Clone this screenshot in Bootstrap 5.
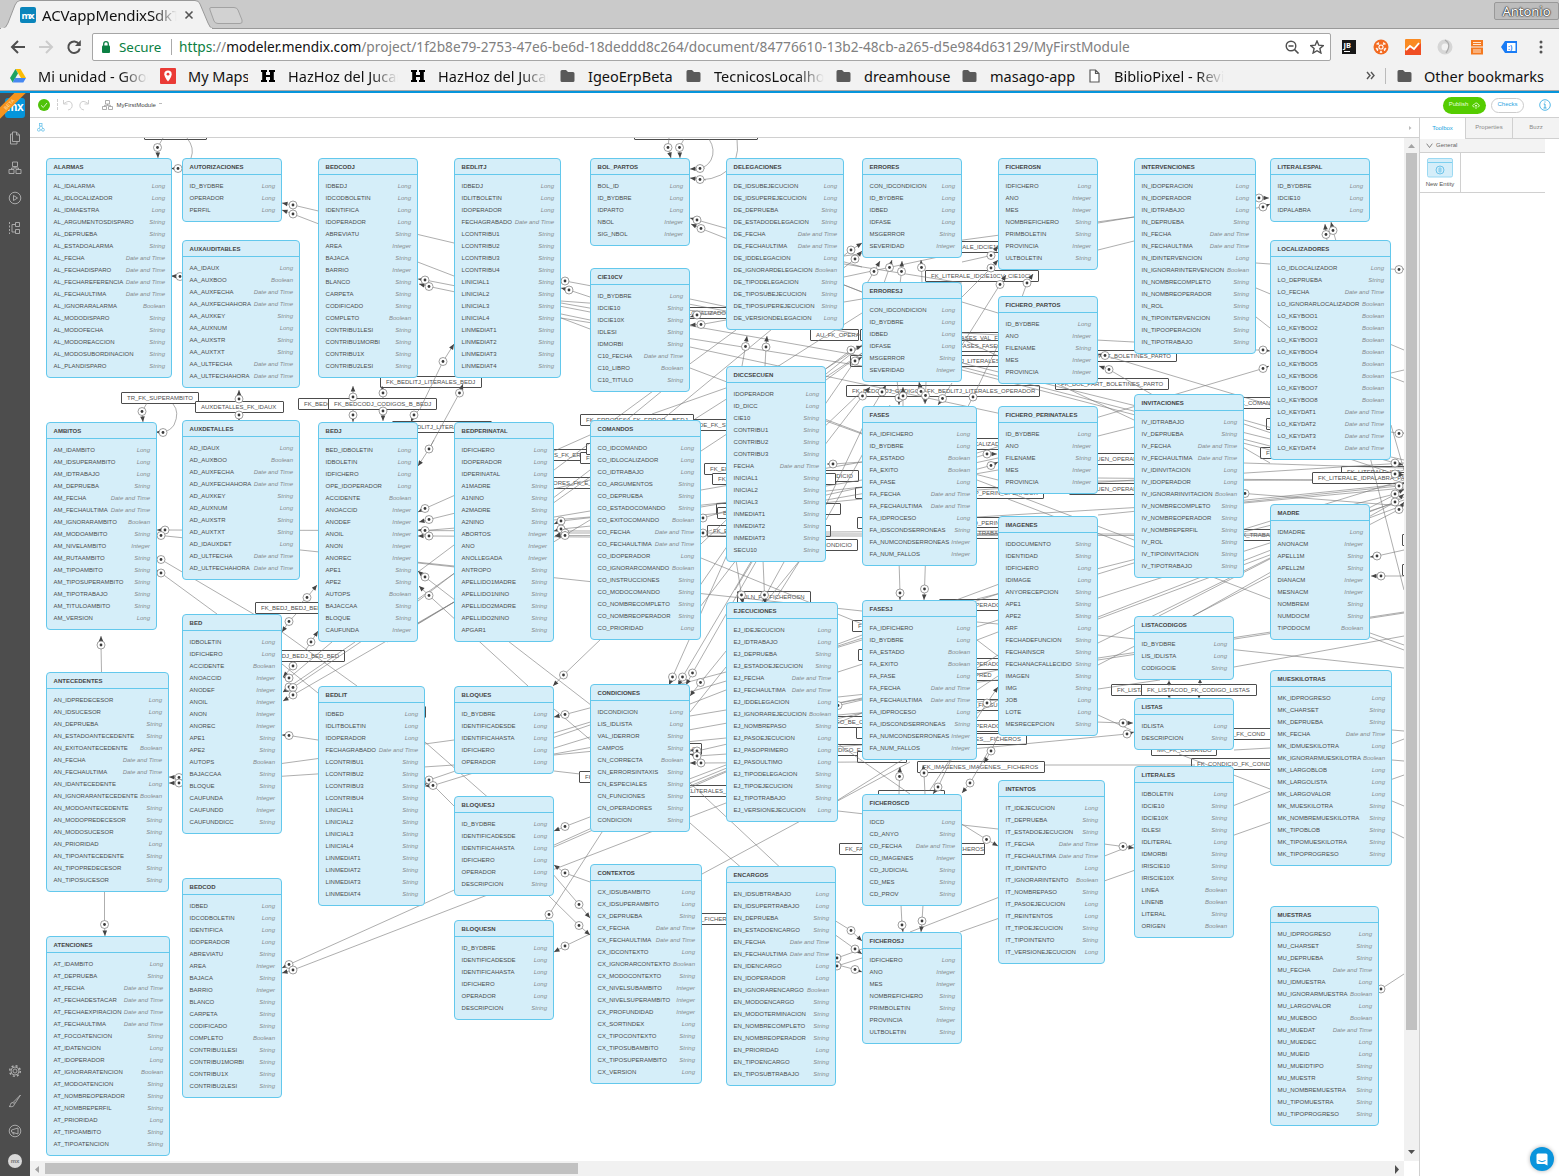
<!DOCTYPE html>
<html lang="en">
<head>
<meta charset="utf-8">
<title>ACVappMendixSdk</title>
<link rel="stylesheet" href="https://cdn.jsdelivr.net/npm/bootstrap@5.3.0/dist/css/bootstrap.min.css">
<style>
html,body{height:100%;overflow:hidden}
body{font-family:"Liberation Sans",Arial,sans-serif;background:#fff;color:#555;font-size:6px;line-height:1.2}
svg{display:block;flex:none}
.chrome{font-family:"Noto Sans","Open Sans",sans-serif;color:#111;font-size:14.5px;line-height:20px}
.tabstrip{height:29px;background:#cacaca;border-bottom:1px solid #999;position:relative}
.tabshape{position:absolute;left:0;top:0}
.tabtitle{width:136px;margin-left:6px;overflow:hidden;white-space:nowrap;font-size:15px;letter-spacing:-.15px;-webkit-mask-image:linear-gradient(90deg,#000 82%,transparent 99%)}
.tabinner{position:relative;height:29px;padding-left:20px}
.userchip{position:absolute;right:0;top:2px;width:65px;height:18px;border:1px solid #999;border-radius:2px;background:#bdbdbd;color:#fff;font-size:13px;line-height:16px;text-align:center;text-shadow:0 0 2px #222,0 0 1px #222,0 0 1px #222}
.toolbar{height:33px;background:#f2f2f2;padding:4px 0 0 10px}
.omnibox{width:1239px;height:28px;border:1px solid #a6a6a6;border-radius:2px;background:#fff;margin-left:10px;padding:0 6px 0 9px;white-space:nowrap}
.urltext{font-size:13.7px;color:#808080}
.bookmarks{height:29px;background:#f2f2f2;border-bottom:1px solid #a9a9a9;position:relative;white-space:nowrap}
.bm{display:flex;align-items:center;overflow:hidden;height:27px;flex:none}
.fade-end{overflow:hidden;-webkit-mask-image:linear-gradient(90deg,#000 75%,transparent 100%)}
.green{color:#0b8043}
.app{border-top:2px solid #0595db;height:1085px}
.siderail{width:30px;background:#4d4d4d;color:#b2b2b2;padding:5px 0 8px;position:relative;overflow:hidden;flex:none}
.siderail svg{margin:0 auto}
.ribbon{position:absolute;width:44px;height:8px;background:#f7941d;color:#ffe0b0;transform:rotate(-45deg);left:-13px;top:7px;font-size:5px;line-height:8px;text-align:center}
.mxlogo{width:20px;height:20px;border-radius:3px;background:#0595db;color:#fff;font-weight:700;font-size:12px;line-height:18px;text-align:center;margin-left:5px;letter-spacing:-.5px}
.head{height:25px;border-bottom:1px solid #d0d0d0}
.pubbtn{width:43px;height:17px;border-radius:9px;background:#5c0;color:#eaffdc}
.chkbtn{width:33px;height:15px;border-radius:8px;border:1px solid #ccc;color:#2ba5df;margin-left:5px}
.subbar{height:20px;border-bottom:1px solid #d0d0d0}
.canvas{position:relative;overflow:hidden;width:1374px;height:1023px}
.space{position:absolute;left:-30px;top:-138px;width:1404px;height:1162px}
.ent{position:absolute;background:#d5eef9;border:1px solid #63c8ec;border-radius:4px;padding:0 6px 5px 6.6px;white-space:nowrap}
.ent h6{font-size:6px;line-height:7px;font-weight:700;margin:0 -6px 5px -6.6px;padding:5px 0 3px 6.6px;height:16px;border-bottom:1px solid #63c8ec;color:#454545}
.attr{display:flex;justify-content:space-between;height:12px;line-height:12px;color:#4c4c4c}
.attr i{color:#858b8e}
.assoc{position:absolute;height:12px;border:1px solid #4c4c4c;border-radius:1px;background:#fff;color:#505050;line-height:10px;padding:0 5px;white-space:nowrap;overflow:hidden}
.assoc.to-end{display:flex;justify-content:flex-end}
.wires{position:absolute;left:0;top:0}
.vbar{width:15px;background:#f1f1f1;padding:0 2px;flex:none}
.hbar{height:15px;background:#f1f1f1;width:1374px}
.panel{width:140px;border-left:1px solid #d0d0d0;flex:none}
.ptab{height:21px;border-left:1px solid #d0d0d0;border-bottom:1px solid #d0d0d0;background:#f3f3f3;color:#8a8a8a}
.ptab.on{background:#fff;border-left:0;border-bottom:0;color:#1ba3e0}
.group-title{height:14px;width:125px;background:#f3f3f3;border-bottom:1px solid #d0d0d0;color:#666;padding-left:6px}
.tool-row{width:125px;height:40px;border-bottom:1px solid #d0d0d0}
.tool{width:41px;height:39px;border-right:1px solid #d0d0d0;padding-top:5px;color:#555}
.chat{position:absolute;left:1530px;top:1147px;width:24px;height:24px;border-radius:50%;background:#0a94dc;box-shadow:0 0 4px rgba(0,0,0,.3)}
</style>
<script src="https://cdn.jsdelivr.net/npm/bootstrap@5.3.0/dist/js/bootstrap.bundle.min.js"></script>
</head>
<body>
<div class="chrome">
  <div class="tabstrip">
    <svg class="tabshape" width="260" height="29"><path d="M0 28.5H3Q6 28 8 23L15 5Q17 .5 20 .5H195Q199 .5 200 4L208 23Q210 28.5 213 28.5" fill="#f2f2f2" stroke="#999"/><path d="M1 28.5H212" stroke="#f2f2f2" stroke-width="1.4"/><path d="M211 7.500H234Q237 7.500 238 10L242 20Q243 23.500 240 23.500H218Q215 23.500 214 21L210 10Q209 7.500 211 7.500" fill="#d2d2d2" stroke="#a2a2a2"/></svg>
    <div class="tabinner d-flex align-items-center">
      <svg width="16" height="16"><rect width="16" height="16" rx="2" fill="#0a85bb"/><text x="8" y="11.500" font-size="9.500" font-weight="700" fill="#fff" text-anchor="middle" textLength="13">mx</text></svg>
      <div class="tabtitle">ACVappMendixSdkT</div>
      <svg width="10" height="10" style="margin-left:6px"><path d="M1.500 1.500L8.500 8.500M8.500 1.500L1.500 8.500" stroke="#555" stroke-width="1.600"/></svg>
    </div>
    <div class="userchip">Antonio</div>
  </div>
  <div class="toolbar d-flex">
    <div class="d-flex align-items-center" style="height:28px;gap:12px">
      <svg width="16" height="16"><path d="M15 8H2M8 2L2 8L8 14" fill="none" stroke="#4f4f4f" stroke-width="2"/></svg>
      <svg width="16" height="16"><path d="M1 8H14M8 2L14 8L8 14" fill="none" stroke="#ccc" stroke-width="2"/></svg>
      <svg width="16" height="16"><path d="M13 5A5.800 5.800 0 1 0 13.800 9.500" fill="none" stroke="#4f4f4f" stroke-width="2"/><path d="M14.800 1V7H9Z" fill="#4f4f4f"/></svg>
    </div>
    <div class="omnibox d-flex align-items-center">
      <svg width="8" height="12"><rect y="4.500" width="8" height="7.500" rx="1" fill="#0b8043"/><path d="M1.700 5V3A2.300 2.300 0 0 1 6.300 3V5" fill="none" stroke="#0b8043" stroke-width="1.300"/></svg>
      <span class="green" style="margin-left:9px;font-size:13.4px;width:52px">Secure</span><span style="width:1px;height:16px;background:#aaa;margin-right:7px"></span>
      <span class="urltext"><span class="green">https</span>://<span style="color:#111">modeler.mendix.com</span>/project/1f2b8e79-2753-47e6-be6d-18deddd8c264/document/84776610-13b2-48cb-a265-d5e984d63129/MyFirstModule</span>
      <svg class="ms-auto" width="15" height="15" style="margin-right:10px"><circle cx="6" cy="6" r="4.800" fill="none" stroke="#4f4f4f" stroke-width="1.400"/><path d="M3.500 6H8.500M9.500 9.500L13.500 13.500" stroke="#4f4f4f" stroke-width="1.700"/></svg>
      <svg width="14" height="14"><path d="M7 1L8.800 5.200L13.300 5.600L9.900 8.600L10.900 13L7 10.700L3.100 13L4.100 8.600L.7 5.600L5.200 5.200Z" fill="none" stroke="#4f4f4f" stroke-width="1.400"/></svg>
    </div>
    <div class="d-flex align-items-center" style="height:28px;gap:16px;margin-left:10px">
      <svg width="16" height="16"><rect x="1" y="1" width="14" height="14" fill="#181818"/><text x="2.500" y="8.500" font-size="7.500" font-weight="700" fill="#fff">JB</text><path d="M3 12.500H9" stroke="#fff"/></svg>
      <svg width="16" height="16"><circle cx="8" cy="8" r="7.500" fill="#f26a21"/><circle cx="8" cy="8" r="2.600" fill="#fff"/><circle cx="8" cy="8" r="1.500" fill="#f26a21"/><path d="M3.500 5L5.500 3.500L5.800 5.500ZM12.500 5L10.500 3.500L10.200 5.500ZM3 9L5 10L4.500 12ZM13 9L11 10L11.500 12ZM7 13.500H9L8 11.800Z" fill="#fff" stroke="#fff" stroke-width=".7"/></svg>
      <svg width="16" height="16"><rect width="16" height="16" rx="1" fill="#fa8a22"/><path d="M0 12L5 8L9 11L16 4V16H0Z" fill="#f04e23"/><path d="M1 11L5 7L9 10L14 4" fill="none" stroke="#fff" stroke-width="1.800"/></svg>
      <svg width="16" height="16"><circle cx="8" cy="8" r="5.500" fill="none" stroke="#d6d6d6" stroke-width="4"/><path d="M8 1Q15 5 9 14" fill="none" stroke="#aaa" stroke-width="1.200"/></svg>
      <svg width="16" height="16"><path d="M2 1H14V7.500H2ZM2 8.500H14V15.500H2Z" fill="#f47920"/><path d="M4 3.500H12M4 5.500H12M4 11H12M4 13H12" stroke="#ffe6d2" stroke-width="1"/></svg>
      <svg width="16" height="16"><path d="M0 8L4 2H16V14H4Z" fill="#1a7cf5"/><rect x="6" y="4" width="8.500" height="8" fill="#fff"/><text x="7" y="10.500" font-size="7" font-weight="700" fill="#1a7cf5">:)</text></svg>
      <svg width="16" height="16"><circle cx="8" cy="3" r="1.500" fill="#555"/><circle cx="8" cy="8" r="1.500" fill="#555"/><circle cx="8" cy="13" r="1.500" fill="#555"/></svg>
    </div>
  </div>
  <div class="bookmarks d-flex" id="bookmarks"></div>
</div>

<div class="app d-flex">
  <div class="siderail d-flex flex-column">
    <div class="mxlogo">mx</div><div class="ribbon">BETA</div>
    <svg style="margin-top:13px" width="14" height="14" fill="none" stroke="currentColor" stroke-width=".9"><path d="M4.500 1H8.500L11.500 4V10.500H4.500ZM8.500 1V4H11.500M4.500 3H2.500V13H9V10.500"/></svg>
    <svg style="margin-top:16px" width="14" height="14" fill="none" stroke="currentColor" stroke-width=".9"><path d="M4.500 1H9.500V5.500H4.500ZM1 8.500H6V12.500H1ZM8 8.500H13V12.500H8ZM7 5.500V7M3.500 8.500V7H10.500V8.500"/></svg>
    <svg style="margin-top:16px" width="14" height="14" fill="none" stroke="currentColor" stroke-width=".9"><circle cx="7" cy="7" r="5.800"/><path d="M5.500 4.500V9.500L9.500 7Z"/></svg>
    <svg style="margin-top:16px" width="14" height="14" fill="none" stroke="currentColor" stroke-width=".9"><path d="M7.500 1.500H11.500V5.500H7.500ZM7.500 8.500H11.500V12.500H7.500ZM4 3.500H7.500M4 3.500V11H7.500"/><path d="M1.500 1V13" stroke-dasharray="2 1.500"/></svg>
    <svg style="margin-top:auto" width="14" height="14" fill="none" stroke="currentColor" stroke-width=".9"><circle cx="7" cy="7" r="2"/><circle cx="7" cy="7" r="4"/><circle cx="7" cy="7" r="5.300" stroke-width="1.500" stroke-dasharray="2 2.160"/></svg>
    <svg style="margin-top:16px" width="14" height="14" fill="none" stroke="currentColor" stroke-width=".9"><path d="M12.500 1L5.500 8L7 9.500L12.500 1M5 8.500Q2.500 8.500 2.500 10.500Q2.500 12 1 12.500Q6 13.500 6.500 10Z"/></svg>
    <svg style="margin-top:16px" width="14" height="14" fill="none" stroke="currentColor" stroke-width=".9"><circle cx="7" cy="7" r="5.800"/><path d="M3.500 6L10 4V10L3.500 8ZM5 8.500V10H6.500"/></svg>
    <svg style="margin-top:16px" width="14" height="14"><circle cx="7" cy="7" r="7" fill="#d9d9d9"/><text x="7" y="9" font-size="6" font-weight="700" fill="#777" text-anchor="middle">mx</text></svg>
  </div>
  <div class="flex-grow-1">
    <div class="head d-flex align-items-center" style="padding-left:8px">
      <svg width="12" height="12"><circle cx="6" cy="6" r="6" fill="#4fc20a"/><path d="M3 6.300L5.300 8.500L9 4" fill="none" stroke="#d8f5c8"/></svg>
      <svg width="40" height="14" style="margin-left:6px" fill="none" stroke="#cfcfcf"><path d="M1.500 1V13" stroke-dasharray="3 1"/><path d="M7.500 2V6H11.500M8 5.500Q14 1 16 6Q17 11 12 12M32.500 2V6H28.500M32 5.500Q26 1 24 6Q23 11 28 12"/></svg>
      <svg width="12" height="10" style="margin-left:6px" fill="none" stroke="#999" stroke-width=".8"><path d="M3.500 .5H7.500V4H3.500ZM.5 6.500H4.500V9.500H.5ZM6.500 6.500H10.500V9.500H6.500ZM5.500 4V5.300M2.500 6.500V5.300H8.500V6.500"/></svg>
      <span style="margin-left:2.500px;padding-top:1px;color:#444">MyFirstModule</span><svg width="5" height="4" style="margin-left:2px"><path d="M1 .5H4" stroke="#bbb"/></svg>
      <div class="ms-auto pubbtn d-flex align-items-center justify-content-center gap-1">Publish<svg width="8" height="7" fill="none" stroke="#eaffdc" stroke-width=".8"><path d="M2.500 5Q.5 5 .7 3.500Q1 2.500 2.300 2.500Q3 .5 5 1Q6 1.500 6 2.500Q7.500 2.500 7.300 4Q7 5 5.500 5M4 7V3M3 4L4 3L5 4"/></svg></div>
      <div class="chkbtn d-flex align-items-center justify-content-center">Checks</div>
      <svg width="12" height="12" style="margin:0 8px 1px 15px"><circle cx="6" cy="6" r="5.300" fill="none" stroke="#2ba5df" stroke-width=".8"/><path d="M6 5V9M4.700 5H6M4.500 9H7.500M5.400 3H6.500" stroke="#2ba5df" stroke-width=".9"/></svg>
    </div>
    <div class="d-flex">
      <div>
        <div class="subbar d-flex align-items-center justify-content-between" style="padding:0 7px"><svg width="8" height="9" fill="none" stroke="#6cc3ea" stroke-width=".8"><rect x="2.500" y=".5" width="2.500" height="2.500"/><circle cx="1.800" cy="6.800" r="1.400"/><circle cx="6" cy="6.800" r="1.400"/><path d="M3.500 3L2 5.500M4.500 3L6 5.500M3.200 7H4.600"/></svg><svg width="4" height="6"><path d="M1 1L3.500 3L1 5Z" fill="#bbb"/></svg></div>
        <div class="d-flex">
          <div>
            <div class="canvas"><div class="space" id="space"></div></div>
            <div class="hbar d-flex align-items-center"><svg width="15" height="14"><path d="M9 4V11L5 7.500Z" fill="#a3a3a3"/></svg><div style="width:533px;height:11px;background:#c1c1c1"></div><svg class="ms-auto" width="12" height="14"><path d="M3 3V12L7 7.500Z" fill="#505050"/></svg></div>
          </div>
          <div class="vbar d-flex flex-column" style="height:1023px"><svg width="11" height="15"><path d="M2 10H9L5.500 6Z" fill="#a3a3a3"/></svg><div style="height:877px;background:#c1c1c1"></div><svg class="mt-auto" width="11" height="16"><path d="M2 5H9L5.500 9Z" fill="#505050"/></svg></div>
        </div>
      </div>
      <div class="panel">
        <div class="d-flex">
          <div class="ptab on d-flex align-items-center justify-content-center" style="width:45px">Toolbox</div>
          <div class="ptab d-flex align-items-center justify-content-center" style="width:47px">Properties</div>
          <div class="ptab d-flex align-items-center justify-content-center" style="width:47px">Buzz</div>
        </div>
        <div class="group-title d-flex align-items-center"><svg width="7" height="6" style="margin-right:3px" fill="none" stroke="#777" stroke-width=".9"><path d="M.7 .7L3.500 4.500L6.300 .7"/></svg>General</div>
        <div class="tool-row"><div class="tool text-center"><svg class="mx-auto" width="26" height="20"><rect x=".5" y=".5" width="25" height="18.500" rx="1.500" fill="#d5eef9" stroke="#9bd9f2"/><path d="M1 4.500H25" stroke="#63c8ec" stroke-width=".8"/><circle cx="13" cy="12" r="4" fill="none" stroke="#53b9e6" stroke-width=".8"/><path d="M12 10H14V14H12ZM12 12H14" fill="none" stroke="#53b9e6" stroke-width=".6"/></svg><div style="margin-top:3px">New Entity</div></div></div>
      </div>
    </div>
  </div>
</div>
<div class="chat"><svg width="24" height="24"><path d="M8 6.500H16Q17.500 6.500 17.500 8V18.500L14.500 17H8Q6.500 17 6.500 15.500V8Q6.500 6.500 8 6.500Z" fill="#fff"/><path d="M8.500 13.500Q12 16 15.500 13.500" fill="none" stroke="#0a94dc" stroke-width="1"/></svg></div>

<script>
/* Bookmark bar: [icon, left gap, icon-to-text gap, text width, text, fades] */
const folder='<svg width="15" height="14"><path d="M.5 2.500Q.5 1 2 1H6L8 3H13Q14.500 3 14.500 4.500V11.500Q14.500 13 13 13H2Q.5 13 .5 11.500Z" fill="#5a5a5a"/></svg>';
const hh='<svg width="14" height="14"><path d="M0 1H6V3H5V6H9V3H8V1H14V3H12.800V11H14V13H8V11H9V8H5V11H6V13H0V11H1.200V3H0Z" fill="#000"/></svg>';
const drive='<svg width="16" height="14"><path d="M5.500 0H10.500L16 9H11Z" fill="#fbbc05"/><path d="M5.500 0L0 9L2.700 13.500L8 4.500Z" fill="#1da362"/><path d="M5 9H16L13.300 13.500H2.700Z" fill="#4688f1"/></svg>';
const maps='<svg width="16" height="16"><rect width="16" height="16" rx="1" fill="#ea3b36"/><path d="M8 2.500A3.700 3.700 0 0 0 4.300 6.200Q4.500 9 8 13.500Q11.500 9 11.700 6.200A3.700 3.700 0 0 0 8 2.500Z" fill="#fff"/><circle cx="8" cy="6.200" r="1.400" fill="#ea3b36"/></svg>';
const page='<svg width="11" height="14"><path d="M1 1H6.500L10 4.500V13H1ZM6.500 1V4.500H10" fill="#fff" stroke="#5a5a5a" stroke-width="1.200"/></svg>';
const bms=[[drive,10,12,110,'Mi unidad - Goog',1],[maps,12,12,60,'My Maps',0],[hh,13,13,110,'HazHoz del Jucar',1],[hh,13,13,110,'HazHoz del Jucar',1],[folder,12,13,86,'IgeoErpBeta',0],[folder,12,13,110,'TecnicosLocalhost',1],[folder,12,13,87,'dreamhouse',0],[folder,11,13,85,'masago-app',0],[page,14,14,110,'BiblioPixel - Revi',1]];
document.getElementById('bookmarks').innerHTML=bms.map(b=>`<div class="bm" style="margin-left:${b[1]}px;gap:${b[2]}px">${b[0]}<span class="${b[5]?'fade-end':''}" style="width:${b[3]}px">${b[4]}</span></div>`).join('')+
`<div class="bm ms-auto" style="margin-right:14px"><svg width="9" height="9" style="margin-right:10px"><path d="M1 1L4 4.500L1 8M5 1L8 4.500L5 8" fill="none" stroke="#555" stroke-width="1.400"/></svg><span style="width:1px;height:16px;background:#bbb;margin-right:11px"></span>${folder}<span style="margin-left:12px;width:121px">Other bookmarks</span></div>`;

/* Entities: NAME x y width attributes, each attribute ends with its type initial */
const T={L:'Long',S:'String',D:'Date and Time',B:'Boolean',I:'Integer'};
const E=`ALARMAS 46 158 126 AL_IDALARMA:L AL_IDLOCALIZADOR:L AL_IDMAESTRA:L AL_ARGUMENTOSDISPARO:S AL_DEPRUEBA:S AL_ESTADOALARMA:S AL_FECHA:D AL_FECHADISPARO:D AL_FECHAREFERENCIA:D AL_FECHAULTIMA:D AL_IGNORARALARMA:B AL_MODODISPARO:S AL_MODOFECHA:S AL_MODOREACCION:S AL_MODOSUBORDINACION:S AL_PLANDISPARO:S
AMBITOS 46 422 111 AM_IDAMBITO:L AM_IDSUPERAMBITO:L AM_IDTRABAJO:L AM_DEPRUEBA:S AM_FECHA:D AM_FECHAULTIMA:D AM_IGNORARAMBITO:B AM_MODOAMBITO:S AM_NIVELAMBITO:I AM_RUTAAMBITO:S AM_TIPOAMBITO:S AM_TIPOSUPERAMBITO:S AM_TIPOTRABAJO:S AM_TITULOAMBITO:S AM_VERSION:L
ANTECEDENTES 46 672 123 AN_IDPREDECESOR:L AN_IDSUCESOR:L AN_DEPRUEBA:S AN_ESTADOANTECEDENTE:S AN_EXITOANTECEDENTE:B AN_FECHA:D AN_FECHAULTIMA:D AN_IDANTECEDENTE:L AN_IGNORARANTECEDENTE:B AN_MODOANTECEDENTE:S AN_MODOPREDECESOR:S AN_MODOSUCESOR:S AN_PRIORIDAD:L AN_TIPOANTECEDENTE:S AN_TIPOPREDECESOR:S AN_TIPOSUCESOR:S
ATENCIONES 46 936 124 AT_IDAMBITO:L AT_DEPRUEBA:S AT_FECHA:D AT_FECHADESTACAR:D AT_FECHAEXPIRACION:D AT_FECHAULTIMA:D AT_FOCOATENCION:S AT_IDATENCION:L AT_IDOPERADOR:L AT_IGNORARATENCION:B AT_MODOATENCION:S AT_NOMBREOPERADOR:S AT_NOMBREPERFIL:S AT_PRIORIDAD:L AT_TIPOAMBITO:S AT_TIPOATENCION:S
AUTORIZACIONES 182 158 100 ID_BYDBRE:L OPERADOR:L PERFIL:L
AUXAUDITABLES 182 240 118 AA_IDAUX:L AA_AUXBOO:B AA_AUXFECHA:D AA_AUXFECHAHORA:D AA_AUXKEY:S AA_AUXNUM:L AA_AUXSTR:S AA_AUXTXT:S AA_ULTFECHA:D AA_ULTFECHAHORA:D
AUXDETALLES 182 420 118 AD_IDAUX:L AD_AUXBOO:B AD_AUXFECHA:D AD_AUXFECHAHORA:D AD_AUXKEY:S AD_AUXNUM:L AD_AUXSTR:S AD_AUXTXT:S AD_IDAUXDET:L AD_ULTFECHA:D AD_ULTFECHAHORA:D
BED 182 614 100 IDBOLETIN:L IDFICHERO:L ACCIDENTE:B ANOACCID:I ANODEF:I ANOIL:I ANON:I ANOREC:I APE1:S APE2:S AUTOPS:B BAJACCAA:S BLOQUE:S CAUFUNDA:I CAUFUNDD:I CAUFUNDDICC:S
BEDCOD 182 878 100 IDBED:L IDCODBOLETIN:L IDENTIFICA:L IDOPERADOR:L ABREVIATU:S AREA:I BAJACA:S BARRIO:I BLANCO:S CARPETA:S CODIFICADO:S COMPLETO:B CONTRIBU1LESI:S CONTRIBU1MORBI:S CONTRIBU1X:S CONTRIBU2LESI:S
BEDCODJ 318 158 100 IDBEDJ:L IDCODBOLETIN:L IDENTIFICA:L IDOPERADOR:L ABREVIATU:S AREA:I BAJACA:S BARRIO:I BLANCO:S CARPETA:S CODIFICADO:S COMPLETO:B CONTRIBU1LESI:S CONTRIBU1MORBI:S CONTRIBU1X:S CONTRIBU2LESI:S
BEDJ 318 422 100 BED_IDBOLETIN:L IDBOLETIN:L IDFICHERO:L OPE_IDOPERADOR:L ACCIDENTE:B ANOACCID:I ANODEF:I ANOIL:I ANON:I ANOREC:I APE1:S APE2:S AUTOPS:B BAJACCAA:S BLOQUE:S CAUFUNDA:I
BEDLIT 318 686 107 IDBED:L IDLITBOLETIN:L IDOPERADOR:L FECHAGRABADO:D LCONTRIBU1:S LCONTRIBU2:S LCONTRIBU3:S LCONTRIBU4:S LINICIAL1:S LINICIAL2:S LINICIAL3:S LINICIAL4:S LINMEDIAT1:S LINMEDIAT2:S LINMEDIAT3:S LINMEDIAT4:S
BEDLITJ 454 158 107 IDBEDJ:L IDLITBOLETIN:L IDOPERADOR:L FECHAGRABADO:D LCONTRIBU1:S LCONTRIBU2:S LCONTRIBU3:S LCONTRIBU4:S LINICIAL1:S LINICIAL2:S LINICIAL3:S LINICIAL4:S LINMEDIAT1:S LINMEDIAT2:S LINMEDIAT3:S LINMEDIAT4:S
BEDPERINATAL 454 422 100 IDFICHERO:L IDOPERADOR:L IDPERINATAL:L A1MADRE:S A1NINO:S A2MADRE:S A2NINO:S ABORTOS:I ANO:I ANOLLEGADA:I ANTROPO:S APELLIDO1MADRE:S APELLIDO1NINO:S APELLIDO2MADRE:S APELLIDO2NINO:S APGAR1:S
BLOQUES 454 686 100 ID_BYDBRE:L IDENTIFICADESDE:L IDENTIFICAHASTA:L IDFICHERO:L OPERADOR:L
BLOQUESJ 454 796 100 ID_BYDBRE:L IDENTIFICADESDE:L IDENTIFICAHASTA:L IDFICHERO:L OPERADOR:L DESCRIPCION:S
BLOQUESN 454 920 100 ID_BYDBRE:L IDENTIFICADESDE:L IDENTIFICAHASTA:L IDFICHERO:L OPERADOR:L DESCRIPCION:S
BOL_PARTOS 590 158 100 BOL_ID:L ID_BYDBRE:L IDPARTO:L NBOL:I SIG_NBOL:I
CIE10CV 590 268 100 ID_BYDBRE:L IDCIE10:S IDCIE10X:S IDLESI:S IDMORBI:S C10_FECHA:D C10_LIBRO:B C10_TITULO:S
COMANDOS 590 420 111 CO_IDCOMANDO:L CO_IDLOCALIZADOR:L CO_IDTRABAJO:L CO_ARGUMENTOS:S CO_DEPRUEBA:S CO_ESTADOCOMANDO:S CO_EXITOCOMANDO:B CO_FECHA:D CO_FECHAULTIMA:D CO_IDOPERADOR:L CO_IGNORARCOMANDO:B CO_INSTRUCCIONES:S CO_MODOCOMANDO:S CO_NOMBRECOMPLETO:S CO_NOMBREOPERADOR:S CO_PRIORIDAD:L
CONDICIONES 590 684 100 IDCONDICION:L LIS_IDLISTA:L VAL_IDERROR:S CAMPOS:S CN_CORRECTA:B CN_ERRORSINTAXIS:S CN_ESPECIALES:S CN_FUNCIONES:S CN_OPERADORES:S CONDICION:S
CONTEXTOS 590 864 112 CX_IDSUBAMBITO:L CX_IDSUPERAMBITO:L CX_DEPRUEBA:S CX_FECHA:D CX_FECHAULTIMA:D CX_IDCONTEXTO:L CX_IGNORARCONTEXTO:B CX_MODOCONTEXTO:S CX_NIVELSUBAMBITO:I CX_NIVELSUPERAMBITO:I CX_PROFUNDIDAD:I CX_SORTINDEX:L CX_TIPOCONTEXTO:S CX_TIPOSUBAMBITO:S CX_TIPOSUPERAMBITO:S CX_VERSION:L
DELEGACIONES 726 158 118 DE_IDSUBEJECUCION:L DE_IDSUPEREJECUCION:L DE_DEPRUEBA:S DE_ESTADODELEGACION:S DE_FECHA:D DE_FECHAULTIMA:D DE_IDDELEGACION:L DE_IGNORARDELEGACION:B DE_TIPODELEGACION:S DE_TIPOSUBEJECUCION:S DE_TIPOSUPEREJECUCION:S DE_VERSIONDELEGACION:L
DICCSECUEN 726 366 100 IDOPERADOR:L ID_DICC:L CIE10:S CONTRIBU1:S CONTRIBU2:S CONTRIBU3:S FECHA:D INICIAL1:S INICIAL2:S INICIAL3:S INMEDIAT1:S INMEDIAT2:S INMEDIAT3:S SECU10:S
EJECUCIONES 726 602 112 EJ_IDEJECUCION:L EJ_IDTRABAJO:L EJ_DEPRUEBA:S EJ_ESTADOEJECUCION:S EJ_FECHA:D EJ_FECHAULTIMA:D EJ_IDDELEGACION:L EJ_IGNORAREJECUCION:B EJ_NOMBREPASO:S EJ_PASOEJECUCION:L EJ_PASOPRIMERO:L EJ_PASOULTIMO:L EJ_TIPODELEGACION:S EJ_TIPOEJECUCION:S EJ_TIPOTRABAJO:S EJ_VERSIONEJECUCION:L
ENCARGOS 726 866 110 EN_IDSUBTRABAJO:L EN_IDSUPERTRABAJO:L EN_DEPRUEBA:S EN_ESTADOENCARGO:S EN_FECHA:D EN_FECHAULTIMA:D EN_IDENCARGO:L EN_IDOPERADOR:L EN_IGNORARENCARGO:B EN_MODOENCARGO:S EN_MODOTERMINACION:S EN_NOMBRECOMPLETO:S EN_NOMBREOPERADOR:S EN_PRIORIDAD:L EN_TIPOENCARGO:S EN_TIPOSUBTRABAJO:S
ERRORES 862 158 100 CON_IDCONDICION:L ID_BYDBRE:L IDBED:L IDFASE:L MSGERROR:S SEVERIDAD:I
ERRORESJ 862 282 100 CON_IDCONDICION:L ID_BYDBRE:L IDBED:L IDFASE:L MSGERROR:S SEVERIDAD:I
FASES 862 406 115 FA_IDFICHERO:L ID_BYDBRE:L FA_ESTADO:B FA_EXITO:B FA_FASE:L FA_FECHA:D FA_FECHAULTIMA:D FA_IDPROCESO:L FA_IDSCONDSERRONEAS:S FA_NUMCONDSERRONEAS:I FA_NUM_FALLOS:I
FASESJ 862 600 115 FA_IDFICHERO:L ID_BYDBRE:L FA_ESTADO:B FA_EXITO:B FA_FASE:L FA_FECHA:D FA_FECHAULTIMA:D FA_IDPROCESO:L FA_IDSCONDSERRONEAS:S FA_NUMCONDSERRONEAS:I FA_NUM_FALLOS:I
FICHEROSCD 862 794 100 IDCD:L CD_ANYO:S CD_FECHA:D CD_IMAGENES:I CD_JUDICIAL:S CD_MES:S CD_PROV:S
FICHEROSJ 862 932 100 IDFICHERO:L ANO:I MES:I NOMBREFICHERO:S PRIMBOLETIN:S PROVINCIA:I ULTBOLETIN:S
FICHEROSN 998 158 100 IDFICHERO:L ANO:I MES:I NOMBREFICHERO:S PRIMBOLETIN:S PROVINCIA:I ULTBOLETIN:S
FICHERO_PARTOS 998 296 100 ID_BYDBRE:L ANO:I FILENAME:S MES:I PROVINCIA:I
FICHERO_PERINATALES 998 406 100 ID_BYDBRE:L ANO:I FILENAME:S MES:I PROVINCIA:I
IMAGENES 998 516 100 IDDOCUMENTO:S IDENTIDAD:S IDFICHERO:L IDIMAGE:L ANYORECEPCION:S APE1:S APE2:S ARF:L FECHADEFUNCION:S FECHAINSCR:S FECHANACFALLECIDO:S IMAGEN:S IMG:S JOB:L LOTE:L MESRECEPCION:S
INTENTOS 998 780 107 IT_IDEJECUCION:L IT_DEPRUEBA:S IT_ESTADOEJECUCION:S IT_FECHA:D IT_FECHAULTIMA:D IT_IDINTENTO:L IT_IGNORARINTENTO:B IT_NOMBREPASO:S IT_PASOEJECUCION:L IT_REINTENTOS:L IT_TIPOEJECUCION:S IT_TIPOINTENTO:S IT_VERSIONEJECUCION:L
INTERVENCIONES 1134 158 122 IN_IDOPERACION:L IN_IDOPERADOR:L IN_IDTRABAJO:L IN_DEPRUEBA:S IN_FECHA:D IN_FECHAULTIMA:D IN_IDINTERVENCION:L IN_IGNORARINTERVENCION:B IN_NOMBRECOMPLETO:S IN_NOMBREOPERADOR:S IN_ROL:S IN_TIPOINTERVENCION:S IN_TIPOOPERACION:S IN_TIPOTRABAJO:S
INVITACIONES 1134 394 110 IV_IDTRABAJO:L IV_DEPRUEBA:S IV_FECHA:D IV_FECHAULTIMA:D IV_IDINVITACION:L IV_IDOPERADOR:L IV_IGNORARINVITACION:B IV_NOMBRECOMPLETO:S IV_NOMBREOPERADOR:S IV_NOMBREPERFIL:S IV_ROL:S IV_TIPOINVITACION:S IV_TIPOTRABAJO:S
LISTACODIGOS 1134 616 100 ID_BYDBRE:L LIS_IDLISTA:L CODIGOCIE:S
LISTAS 1134 698 100 IDLISTA:L DESCRIPCION:S
LITERALES 1134 766 100 IDBOLETIN:L IDCIE10:S IDCIE10X:S IDLESI:S IDLITERAL:L IDMORBI:S IRISCIE10:S IRISCIE10X:S LINEA:B LINENB:B LITERAL:S ORIGEN:B
LITERALESPAL 1270 158 100 ID_BYDBRE:L IDCIE10:L IDPALABRA:L
LOCALIZADORES 1270 240 121 LO_IDLOCALIZADOR:L LO_DEPRUEBA:S LO_FECHA:D LO_IGNORARLOCALIZADOR:B LO_KEYBOO1:B LO_KEYBOO2:B LO_KEYBOO3:B LO_KEYBOO4:B LO_KEYBOO5:B LO_KEYBOO6:B LO_KEYBOO7:B LO_KEYBOO8:B LO_KEYDAT1:D LO_KEYDAT2:D LO_KEYDAT3:D LO_KEYDAT4:D
MADRE 1270 504 100 IDMADRE:L ANONACM:I APELL1M:S APELL2M:S DIANACM:I MESNACM:I NOMBREM:S NUMDOCM:S TIPODOCM:B
MUESKILOTRAS 1270 670 122 MK_IDPROGRESO:L MK_CHARSET:S MK_DEPRUEBA:S MK_FECHA:D MK_IDMUESKILOTRA:L MK_IGNORARMUESKILOTRA:B MK_LARGOBLOB:L MK_LARGOLISTA:L MK_LARGOVALOR:L MK_MUESKILOTRA:S MK_NOMBREMUESKILOTRA:S MK_TIPOBLOB:S MK_TIPOMUESKILOTRA:S MK_TIPOPROGRESO:S
MUESTRAS 1270 906 109 MU_IDPROGRESO:L MU_CHARSET:S MU_DEPRUEBA:S MU_FECHA:D MU_IDMUESTRA:L MU_IGNORARMUESTRA:B MU_LARGOVALOR:L MU_MUEBOO:B MU_MUEDAT:D MU_MUEDEC:L MU_MUEID:L MU_MUEIDTIPO:S MU_MUESTR:S MU_NOMBREMUESTRA:S MU_TIPOMUESTRA:S MU_TIPOPROGRESO:S`;

/* Association labels: x y width text; ">" aligns the text to the right end */
const A=`144 128 63 .
121 392 78 TR_FK_SUPERAMBITO
195 401 89 AUXDETALLES_FK_IDAUX
298 398 60 FK_BEDCODJ
328 398 109 FK_BEDCODJ_CODIGOS_B_BEDJ
380 376 102 FK_BEDLITJ_LITERALES_BEDJ
392 421 100 FK_BEDLITJ_LITERALES_BED
255 602 90 FK_BEDJ_BEDJ_BEDJ
255 650 90 >FK_BEDJ_BEDJ_BED_BED
330 706 96 .
634 128 124 .
671 307 80 FK_LOCALIZADORES
810 329 49 AU_FK_OPERADOR
860 329 60 .
850 355 80 .
846 385 112 FK_BEDCODJ_CODIGOS_OPE
921 385 119 FK_BEDLITJ_LITERALES_OPERADOR
580 414 114 FK_ERRORESJ_FK_ERROR__BEDJ
693 419 60 DE_FK_SUBEJEC
525 449 66 >ERRORES_FK_ERR
580 452 40 FK_E
586 443 40 FK_E
520 477 81 >ERRORES_FK_E__
716 470 143 >FK_ERRORES_FK_CONDICIO
704 463 60 FK_ERRORES
712 473 124 FK_ERRORES_FK_COMANDO__CO_
716 503 125 FK_ERRORES_FK_OPERADORO_
717 507 60 B
750 539 108 >FK_ERRO_FK_CONDICIO
707 525 124 FK_ERRORES_FK
855 487 50 .
857 517 50 .
737 591 74 ULN_FK_FICHEROSN
852 620 50 F
858 649 50 .
823 716 60 DIGO_BE_C
823 744 60 CODIGO_E
856 727 50 .
857 751 50 .
910 241 104 >FK_LITERALE_IDCIE10CV
925 270 114 FK_LITERALE_IDCIE10CV_CIE10CV
944 332 100 K_FASES_VAL_FICH
946 340 100 K_FASES_FASES
934 355 100 BEDLITJ_LITERALES
1060 350 117 >FK_BOL_PART_BOLETINES_PARTO
1055 378 114 FK_BOL_PART_BOLETINES_PARTO
1219 397 80 KO_FK_COMAND
1266 418 50 .
1260 447 50 FK
949 438 60 FK_LOCALIZADOR
1069 453 100 FK_DICUEN_OPERAD
1069 483 100 FK_DICUEN_OPERAD
944 487 100 >FK_BEDP_PERIN_OPERADOR
944 517 100 FK_BEDO_PERIN
944 527 100 FK_INTE_TRABA
939 599 100 FK_FAS_OPERADOR
939 658 100 FK_FAS_OPERADOR
947 669 90 FK_FK_PRED
942 699 90 EJEC_EN_FK_SU
939 720 100 FK_FAS_OPERADOR
930 733 97 >FASES_IMAGENES__FICHEROS
917 761 128 FK_IMAGENES_IMAGENES__FICHEROS
878 790 67 .
839 843 146 FK_FASESJ_FASES_VAL_FICHEROS_FICHEROS
695 913 60 _FICHEROS
677 785 70 FKLITERALES_
579 771 40 FK
660 743 42 >FK_C
1111 684 60 FK_LISTACOD
1141 684 116 FK_LISTACOD_FK_CODIGO_LISTAS
1204 728 90 ICIONIO_FK_COND
1191 758 100 FK_CONDICIO_FK_COND
1151 744 66 MK_FK_COMANDO
1225 529 70 FKFK_TRABAJO
1341 466 80 FK_LITERALE_IDP
1312 472 120 FK_LITERALE_IDPALABRA_PA
1402 534 40 .
1402 564 40 .`;

/* Connectors with an end circle: circle x y, arrow tip x y, tail x y */
const M=`157.5 147.5 158 158 163 138
178 168.500 171 168.500 181 166
180 276.500 171 276 300 285
293 205 282 203 454 243
293 214 282 210 454 276
425 280 418 279 590 312
429 286.500 419 284 590 320
443 361.500 454 344 420 409
459.500 393 463 384 429 449
429 449 418 466 434 440
142 411.500 143 422 147 403
163 432.500 156 432 166 431
239 399 239 390 239 401
239 415 239 421 239 413
353 397 353 386 353 398
353 415 353 422 353 410
383 393 382 386 383 398
383 411 383 421 383 410
414 415 411 422 420 409
165 530 157 530 590 531
161 535.500 157 535 454 566
161 559.500 157 557 262 619
161 573 157 570 217 614
307 597.500 317 585 301 603
289 621.500 282 632 296 614
311 642 318 631 305 651
293 666 283 677 296 661
289 678 283 677 332 642
289 687 283 692 355 642
293 687.500 283 692 362 641
293 695 283 701 454 602
289 735.500 282 735 318 740
101 645 101 636 101.500 672
425 508.500 418 512 590 435
429 519.500 419 522 590 480
425 530.500 418 530 590 517
429 536 418 536 590 537
425 577 418 571 600 712
429 595.500 419 586 528 686
179 777.500 169 777 454 740
179 783 169 783 454 765
429 780 425 785 590 725
433 785.500 425 786 590 737
104.500 924.500 105 936 104.500 890
289 964.500 282 968 603 823
293 970 282 973 726 803
565 281 561 280 726 311
569 290 561 288 590 297
668 147.500 671 158 669 138
679.500 147.500 680 158 684 139
700 168.500 690 169 705 168
700 179.500 690 178 706 180
697 220 690 218 862 267
701 228.500 691 224 862 292
697 315 690 317 715 313
701 324.500 690 325 726 320
745.500 346.500 747 336 742 366
766 347 767 336 765 366
851 250 862 243 842 257
855 259 862 251 841 270
851 350 862 346 730 440
855 361 862 357 690 600
874 271.500 880 261 866 285
889.500 267.500 892 260 884 283
901.500 271.500 902 261 900 284
921.500 267.500 921 260 922 283
991 255.500 998 246 962 262
991 268 998 260 962 297
1000 284.500 1006 275 962 345
1027 283 1033 274 1022 297
1259 198 1269 198 1254 195
1263 207 1270 204 1250 209
1326 234.500 1325 224 1327 240
1333 230.500 1331 222 1336 241
1399 269.500 1404 269 1390 269
1263 350 1270 351 1240 350
1263 368.500 1269 366 977 453
1105 355.500 1098 354 1270 405
1109 369.500 1099 366 1270 463
862.500 396 870 387 690 620
882 392 886 385 870 412
899 398 899 405 897 380
903 396 903 387 903 406
921 391.500 919 382 924 402
925.500 395.500 925 404 926 382
942.500 398.500 938 405 952 383
973 397 965 412 998 345
987 454 997 454 977 457
991 465.500 998 462 970 471
1399 433.500 1404 433 1391 432
1395 463 1403 465 1244 420
1395 474 1404 475 1244 424
1399 486 1404 482 1244 502
1395 494 1404 489 977 599
1395 502 1404 494 1098 617
1399 509.500 1404 502 1098 665
833 464 827 464 862 462
561 521 554 524 862 487
561 529 554 531 862 499
565 533 555 536 726 533
565 535.500 555 536 862 536
703 518 701 519 726 511
703 533 701 535 712 530
1245 493.500 1242 493 1404 506
1377 556 1370 557 1404 550
1381 576 1371 576 1404 576
900 593 900 600 899 560
924.500 589 924 600 925.500 560
741.500 595 743 604 736 560
764.500 595 765 604 763 560
1123 723 1133 723 1096 722
1127 734 1134 732 930 753
987 703 998 687 930 790
991 751 984 763 998 736
970 783 962 793 988 752
938 787 933 794 952 758
899.500 776.500 900 767 899 794
924 773 923 765 925 794
986.500 839.500 998 846 960 823
1123 846.500 1134 848 1104 844
902 925 903 932 901 905
922 921 921 932 923 905
851 930.500 862 941 834 920
855 949 862 954 834 934
855 969.500 862 972 834 964
837 958 835 959 862 949
837 966 835 966 862 958
697 751 690 750 862 713
697 756 690 754 862 745
701 763 690 763 862 762
565 826.500 554 831 726 765
565 873 554 865 590 882
549 914.500 541 927 604 829
579 904.500 590 918 552 873
579 925.500 590 935 549 896
565 946 554 952 590 934
565 714.500 554 717 726 672
563.500 675 553 686 602 638
672.500 677 669 685 730 548
682.500 677 678 686 752 560
692.500 673 686 685 757 560
700.500 682.500 690 696 800 560
838 705.500 834 706 862 700
1381 989 1378 989 1404 974`;

/* Plain connector segments */
const L=`561 301 726 313|561 303 862 356|561 318 590 329|561 318 862 366|690 299 860 335|690 347 1030 420|690 368 880 440|615 419 736 330|663 419 800 306|652 414 726 388|695 419 862 313|844 264 962 283|844 285 862 292|844 302 862 299|844 277 962 252|844 256 1134 217|1098 223 1134 217|1098 250 1134 241|826 374 862 345|826 377 862 353|826 380 880 340|962 302 998 313|1256 263 1270 264|1256 288 1404 350|1256 317 1270 328|962 363 1270 439|962 367 1270 446|962 370 1270 450|962 333 1134 342|962 339 1134 420|1098 436 1134 427|1098 478 1312 480|1098 481 1312 480|1244 463 1404 468|1244 503 1404 488|977 534 1270 534|977 535.500 1270 535.500|977 490 1404 463|977 517 1244 501|1098 574 1404 480|1098 598 1404 500|1098 619 1404 505|1159 616 1404 490|1193 616 1404 497|1098 643 1270 558|1098 658 1404 612|1098 660 1404 613|1098 635 1404 668|1234 667 1404 636|1370 633 1404 645|1008 499 1404 650|1370 457 1404 590|1391 425 1404 470|1391 373 1404 370|1391 377 1404 382|1098 715 1131 730|1098 689 1160 680|1045 765 1195 765|1179 754 1270 789|702 874 910 762|838 811 998 829|838 744 910 794|910 932 1404 739|960 932 1404 775|1392 760 1404 761|1392 801 1404 806|1392 832 1404 838|690 786 800 740|690 783 862 713|690 823 744 870|690 783 785 872|554 847 726 772|554 755 726 738|554 754 862 699|554 771 580 774|554 733 862 640|554 709 600 748|425 742 500 808|433 785 454 806|282 632 357 686|282 664 318 693|387 642 454 602|418 601 590 470|418 624 590 520|418 599 590 477|418 572 590 443|418 563 862 611|701 558 862 624|554 517 590 511|726 667 690 712|726 710 690 716|726 690 690 704|838 644 1010 580|838 646 1010 590|838 672 998 620|838 697 998 680|838 703 998 670|838 715 998 700|838 800 998 700|784 562 762 602|799 562 775 600|752 562 735 590|826 505 870 412|826 520 890 405|826 534 998 534|826 532 998 531|826 500 998 470|826 421 862 434|826 495 998 458|862 445 998 480|977 622 998 624|977 640 998 632|977 668 998 655|977 690 998 676|977 480 1134 540|1391 474 1404 470|1391 457 1404 460|1098 515 1404 484|1234 750 1270 748|1392 730 1404 731|1169 680 1169 686|1200 680 1200 686|1170 695 1170 699|1199 695 1199 699|977 640 998 656|590 450 690 368|701 451 862 345|701 490 862 462|701 507 862 480|701 544 862 391`;

const space=document.getElementById('space');
let h='';
for(const r of A.split('\n')){const p=r.split(' '),t=p[3];const end=t[0]==='>';
 h+=`<div class="assoc${end?' to-end':''}" style="left:${p[0]}px;top:${p[1]}px;width:${p[2]}px">${t==='.'?'':t.replace('>','')}</div>`}
let lines='',heads='M1200 679L1202 683H1198ZM1169 681L1171 684H1167ZM1169 698L1167 695H1171ZM1199 698L1197 695H1201Z',rings='';
for(const r of L.split('|')){const p=r.split(' ');lines+=`M${p[0]} ${p[1]}L${p[2]} ${p[3]}`}
for(const r of M.split('\n')){const [cx,cy,tx,ty,ex,ey]=r.split(' ').map(Number);
 lines+=`M${tx} ${ty}L${cx} ${cy}L${ex} ${ey}`;
 const d=Math.hypot(tx-cx,ty-cy)||1,ux=(tx-cx)/d,uy=(ty-cy)/d,bx=tx-ux*5.500,by=ty-uy*5.500;
 heads+=`M${tx} ${ty}L${bx-uy*2.300} ${by+ux*2.300}L${bx+uy*2.300} ${by-ux*2.300}Z`;
 rings+=`<circle cx="${cx}" cy="${cy}" r="4" fill="#fff" stroke="#777" stroke-width=".7"/><circle cx="${cx}" cy="${cy}" r="1.400" fill="#3a3a3a"/>`}
lines+='M187 138Q195 148 191 158Q188 165 180 168M173 404Q180 412 174 425Q170 431 163 432M709 139Q716 150 711 160Q707 167 700 168M737 139Q739 150 735 162Q724 179 700 180';
h+=`<svg class="wires" width="1404" height="1162"><path d="${lines}" fill="none" stroke="#777" stroke-width=".6"/><path d="${heads}" fill="#444"/>${rings}</svg>`;
for(const r of E.split('\n')){const p=r.split(' ');
 h+=`<div class="ent" style="left:${p[1]}px;top:${p[2]}px;width:${p[3]}px"><h6>${p[0]}</h6>${p.slice(4).map(a=>{const q=a.split(':');return `<div class="attr"><span>${q[0]}</span><i>${T[q[1]]}</i></div>`}).join('')}</div>`}
space.innerHTML=h;
</script>
</body>
</html>
